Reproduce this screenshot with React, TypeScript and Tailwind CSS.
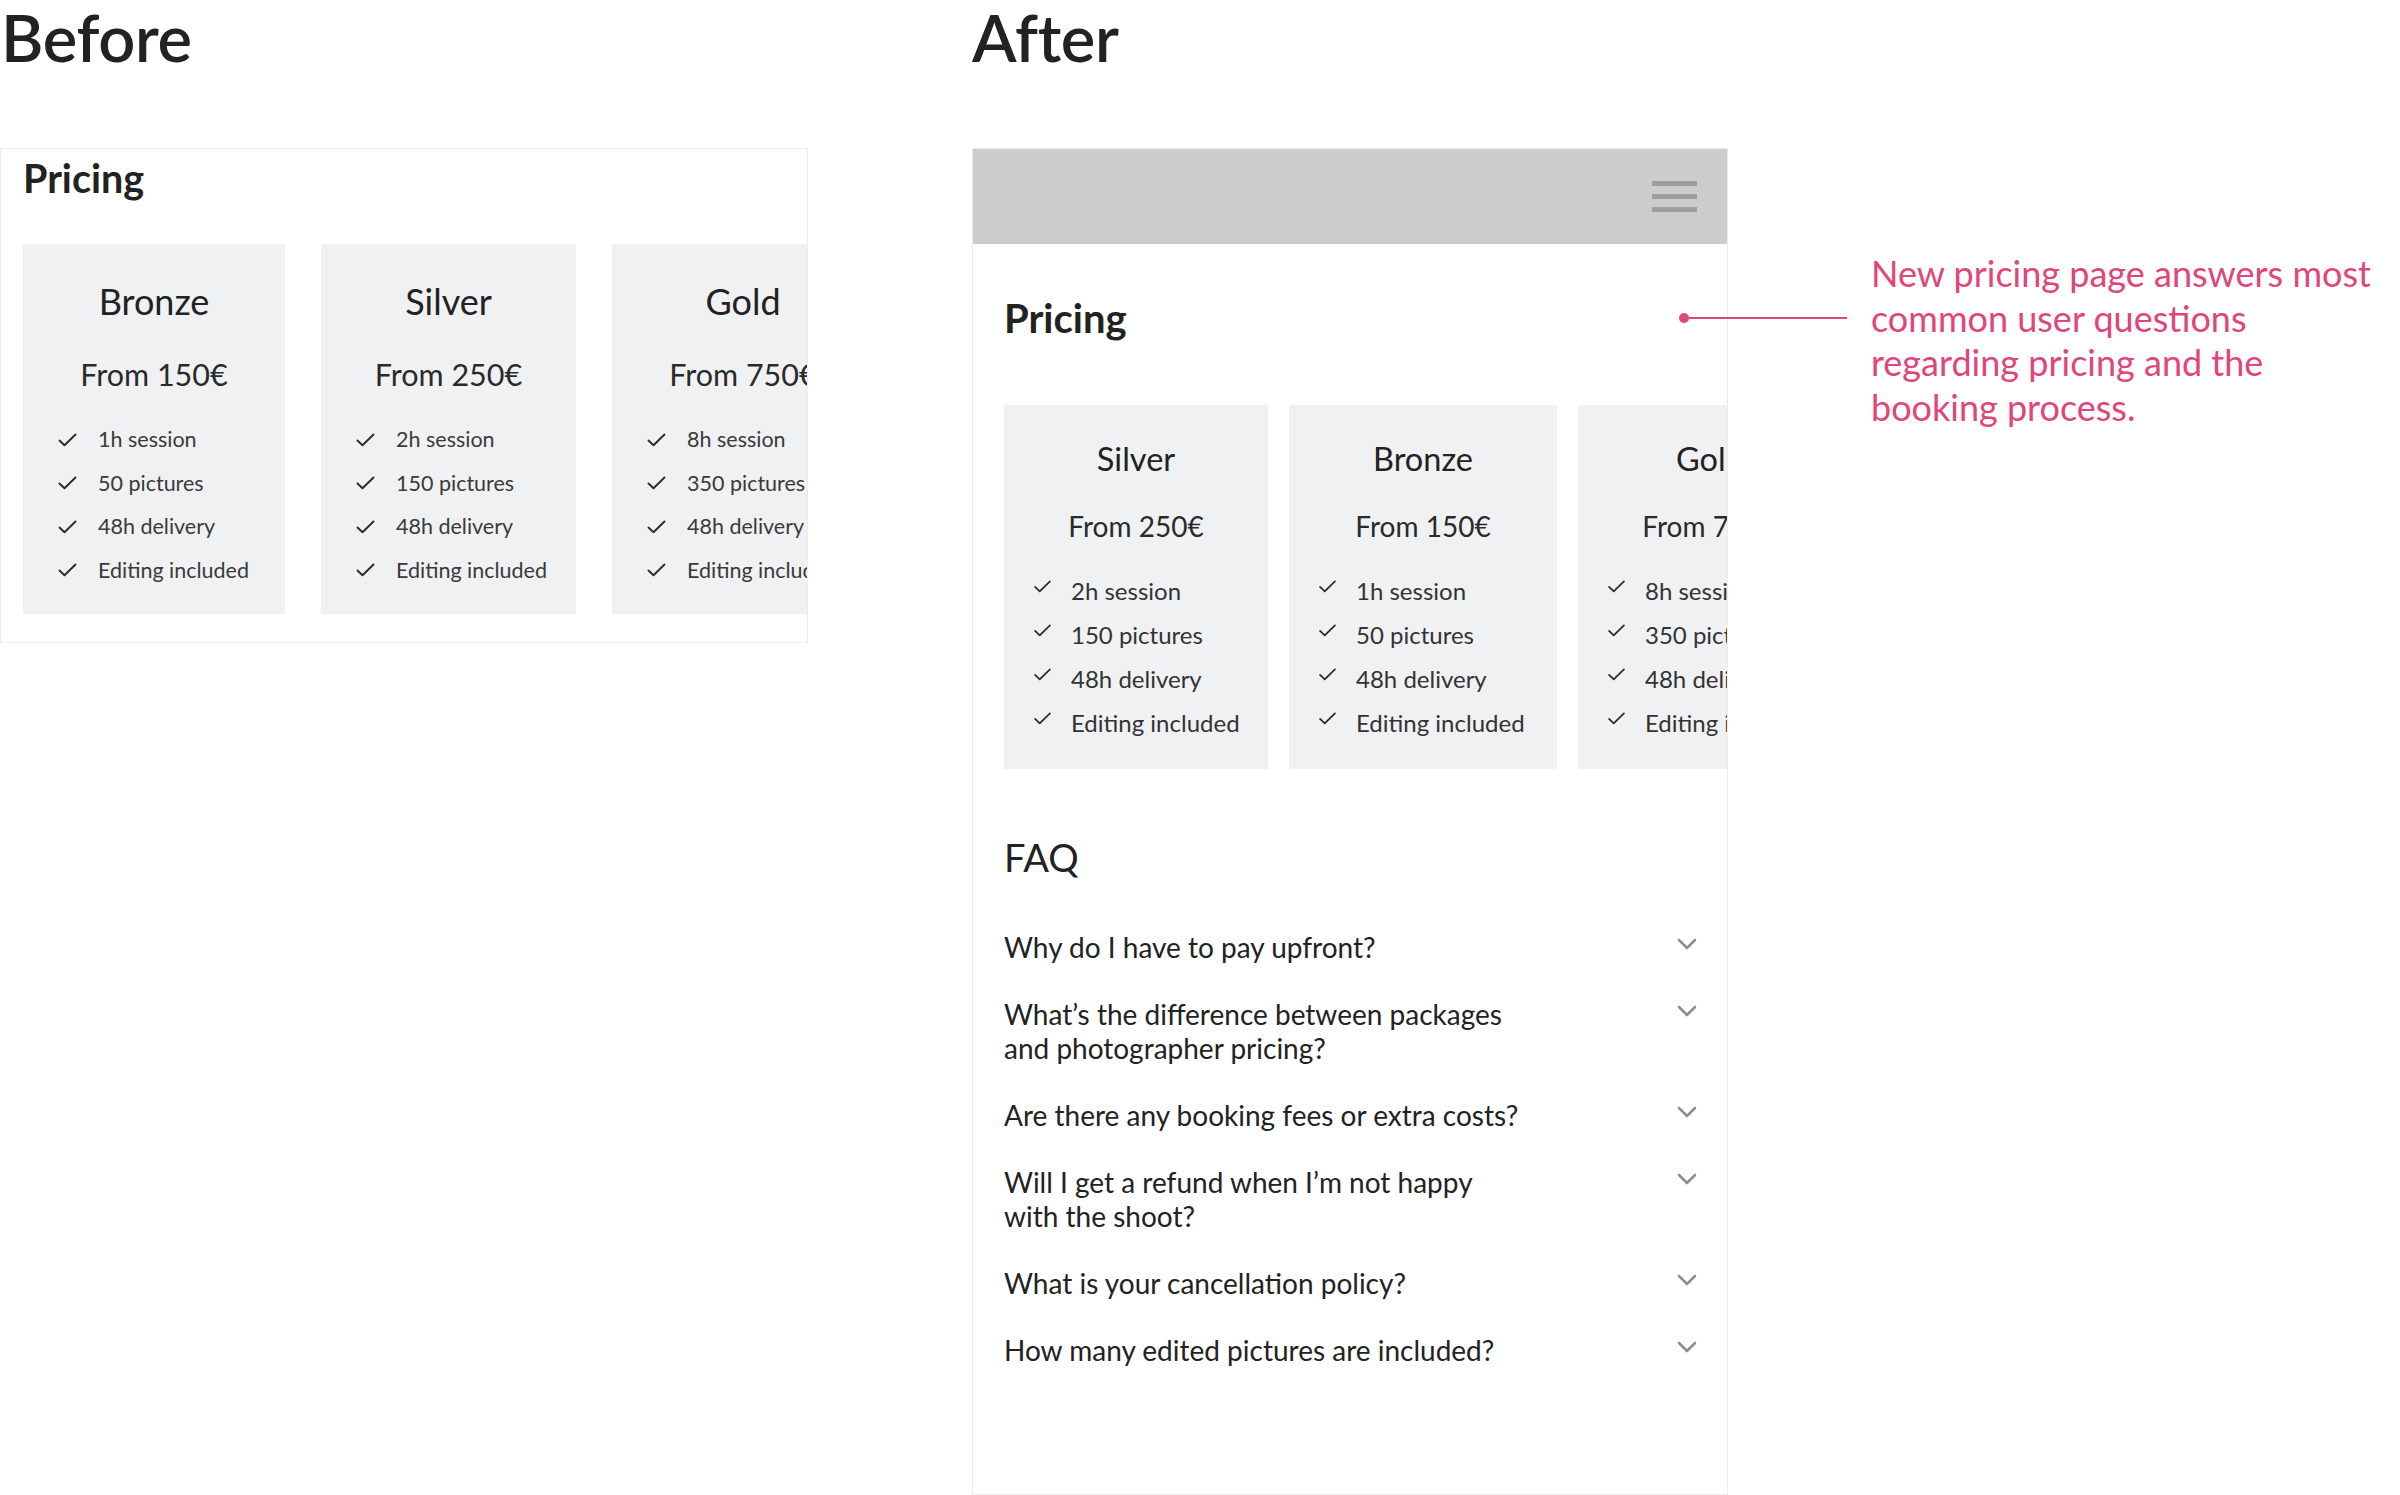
import type { ReactNode } from 'react';

type Plan = { name: string; price: string; features: string[] };

const bronze: Plan = { name: 'Bronze', price: 'From 150€', features: ['1h session', '50 pictures', '48h delivery', 'Editing included'] };
const silver: Plan = { name: 'Silver', price: 'From 250€', features: ['2h session', '150 pictures', '48h delivery', 'Editing included'] };
const gold: Plan = { name: 'Gold', price: 'From 750€', features: ['8h session', '350 pictures', '48h delivery', 'Editing included'] };

const faqs: ReactNode[] = [
  'Why do I have to pay upfront?',
  <>What’s the difference between packages<br />and photographer pricing?</>,
  'Are there any booking fees or extra costs?',
  <>Will I get a refund when I’m not happy<br />with the shoot?</>,
  'What is your cancellation policy?',
  'How many edited pictures are included?',
];

function Check({ small }: { small?: boolean }) {
  return (
    <svg
      width={small ? 19 : 19}
      height={small ? 13 : 14}
      viewBox="0 0 19 14"
      fill="none"
      className="shrink-0"
    >
      <path d="M1.5 7.5 L6.5 12.2 L17.5 1.5" stroke="#2a2a2a" strokeWidth="1.9" strokeLinecap="round" strokeLinejoin="round" />
    </svg>
  );
}

function Chevron() {
  return (
    <svg width="20" height="12" viewBox="0 0 20 12" fill="none" className="shrink-0">
      <path d="M2 2 L10 10 L18 2" stroke="#8f8f8f" strokeWidth="2.6" strokeLinecap="round" strokeLinejoin="round" />
    </svg>
  );
}

// old layout: bigger titles, smaller feature text
function OldCard({ plan, width }: { plan: Plan; width: string }) {
  return (
    <div className={`${width} shrink-0 bg-[#f0f1f3] pt-[39px] pb-[33px]`}>
      <div className="text-center text-[36px] leading-none text-[#222]">{plan.name}</div>
      <div className="mt-[40px] text-center text-[30.5px] leading-none text-[#2a2a2a]">{plan.price}</div>
      <ul className="mt-[40px] flex flex-col gap-[22px] pl-[35px]">
        {plan.features.map((f) => (
          <li key={f} className="flex items-center gap-[21px] whitespace-nowrap text-[21.5px] leading-none text-[#3a3a3a]">
            <Check />
            {f}
          </li>
        ))}
      </ul>
    </div>
  );
}

function NewCard({ plan, width }: { plan: Plan; width: string }) {
  return (
    <div className={`${width} shrink-0 bg-[#f0f1f3] pt-[38px] pb-[34px]`}>
      <div className="text-center text-[32.5px] leading-none text-[#222]">{plan.name}</div>
      <div className="mt-[36px] text-center text-[28px] leading-none text-[#2a2a2a]">{plan.price}</div>
      <ul className="mt-[39px] flex flex-col gap-[20px] pl-[29px]">
        {plan.features.map((f) => (
          <li key={f} className="flex items-start gap-[19px] whitespace-nowrap text-[24px] leading-none text-[#333]">
            <span className="pt-[1px]">
              <Check small />
            </span>
            {f}
          </li>
        ))}
      </ul>
    </div>
  );
}

export default function App() {
  return (
    <div className="relative flex h-[1495px] w-[2400px] overflow-hidden bg-white font-['Lato',sans-serif] text-[#222]">
      {/* Before */}
      <div className="flex w-[808px] shrink-0 flex-col">
        <h1 className="pl-[1px] pt-[5px] text-[65px] font-semibold leading-none tracking-[-0.3px] text-[#222]">Before</h1>
        <div className="mt-[78px] h-[495px] overflow-hidden border border-[#ececec] pl-[22px] pt-[9px]">
          <h2 className="text-[39.5px] font-bold leading-none text-[#222]">Pricing</h2>
          <div className="mt-[46px] flex gap-[36px]">
            <OldCard plan={bronze} width="w-[262px]" />
            <OldCard plan={silver} width="w-[255px]" />
            <OldCard plan={gold} width="w-[262px]" />
          </div>
        </div>
      </div>

      {/* After */}
      <div className="ml-[164px] flex w-[756px] shrink-0 flex-col">
        <h1 className="pt-[5px] text-[65px] font-semibold leading-none tracking-[-0.3px] text-[#222]">After</h1>
        <div className="mt-[78px] flex flex-1 flex-col overflow-hidden border border-[#ececec]">
          <div className="flex h-[95px] shrink-0 items-center justify-end bg-[#cbcccd] pr-[30px]">
            <div className="flex flex-col gap-[8px]">
              <span className="block h-[5px] w-[45px] bg-[#9d9ea0]" />
              <span className="block h-[5px] w-[45px] bg-[#9d9ea0]" />
              <span className="block h-[5px] w-[45px] bg-[#9d9ea0]" />
            </div>
          </div>

          <div className="pl-[31px]">
            <h2 className="mt-[54px] text-[40px] font-bold leading-none text-[#222]">Pricing</h2>
            <div className="mt-[67px] flex gap-[21px]">
              <NewCard plan={silver} width="w-[264px]" />
              <NewCard plan={bronze} width="w-[268px]" />
              <NewCard plan={gold} width="w-[264px]" />
            </div>

            <h2 className="mt-[69px] text-[38px] leading-none text-[#222]">FAQ</h2>
            <ul className="mt-[54px] flex flex-col gap-[33px] pr-[30px]">
              {faqs.map((q, i) => (
                <li key={i} className="flex items-start justify-between">
                  <span className="whitespace-nowrap text-[28px] leading-[34px] text-[#222]">{q}</span>
                  <span className="pt-[8px]">
                    <Chevron />
                  </span>
                </li>
              ))}
            </ul>
          </div>
        </div>
      </div>

      {/* Callout */}
      <div className="absolute left-[1679px] top-[251px] flex items-start">
        <div className="mt-[62px] flex items-center">
          <span className="block h-[10px] w-[10px] rounded-full bg-[#e0457b]" />
          <span className="block h-[2px] w-[158px] bg-[#e0457b]" />
        </div>
        <p className="ml-[24px] text-[36px] leading-[44.5px] text-[#e0457b]">
          New pricing page answers most
          <br />
          common user questions
          <br />
          regarding pricing and the
          <br />
          booking process.
        </p>
      </div>
    </div>
  );
}
